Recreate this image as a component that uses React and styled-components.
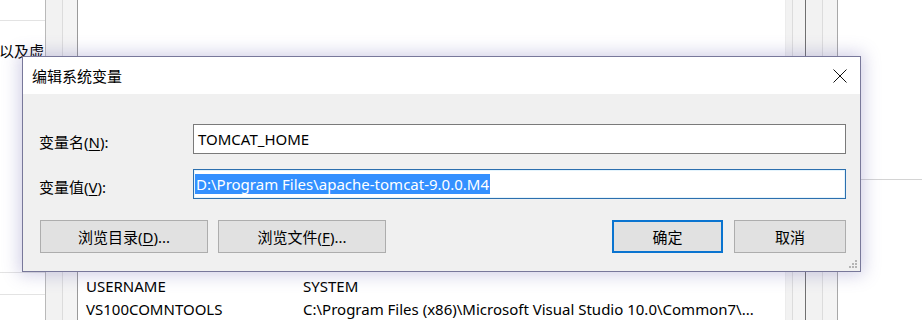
import React from 'react';
import styled, { createGlobalStyle } from 'styled-components';

const GlobalStyle = createGlobalStyle`
  html, body {
    margin: 0;
    padding: 0;
    background: #ffffff;
  }
  body {
    width: 922px;
    height: 320px;
    overflow: hidden;
    font-family: "Segoe UI", "Noto Sans", "Noto Sans CJK SC", sans-serif;
    font-size: 15px;
    color: #000;
  }
`;

const Desktop = styled.div`
  position: relative;
  display: flex;
  width: 922px;
  height: 320px;
  overflow: hidden;
  background: #fff;
`;

const LeftPane = styled.div`
  width: 45px;
  flex: none;
  display: flex;
  flex-direction: column;
  overflow: hidden;
  background: #fff;
`;

const PaneLine = styled.div`
  height: 1px;
  background: #e3e3e3;
  margin-top: ${p => p.$gap}px;
`;

const PaneText = styled.div`
  margin-top: 20px;
  white-space: nowrap;
  line-height: 20px;
  margin-left: -1px;
`;

const FrameStrip = styled.div`
  width: ${p => p.$w}px;
  flex: none;
  box-sizing: border-box;
  border-left: 1px solid ${p => p.$left};
  border-right: 1px solid ${p => p.$right};
  background: linear-gradient(
    to right,
    #f2f2f2 0,
    #f2f2f2 ${p => p.$mid}px,
    #dcdcdc ${p => p.$mid}px,
    #dcdcdc ${p => p.$mid + 1}px,
    #f4f4f4 ${p => p.$mid + 1}px
  );
`;

const List = styled.div`
  width: 707px;
  flex: none;
  display: flex;
  flex-direction: column;
  padding-top: 275px;
  box-sizing: border-box;
  background: #fff;
`;

const ListRow = styled.div`
  display: flex;
  height: 24px;
  align-items: center;
  padding-left: 8px;
  white-space: nowrap;
`;

const NameCell = styled.div`
  width: 217px;
  flex: none;
`;

const RightArea = styled.div`
  flex: 1;
  display: flex;
  flex-direction: column;
`;

const RightLine = styled.div`
  margin-top: 179px;
  height: 1px;
  background: #d4d4d4;
`;

const Dialog = styled.div`
  position: absolute;
  left: 22px;
  top: 56px;
  width: 839px;
  height: 216px;
  box-sizing: border-box;
  border: 1px solid #78789a;
  background: #f0f0f0;
  display: flex;
  flex-direction: column;
  box-shadow: 0 0 16px 3px rgba(95, 85, 170, 0.28);
`;

const TitleBar = styled.div`
  height: 37px;
  flex: none;
  background: #fff;
  display: flex;
  align-items: center;
  justify-content: space-between;
  padding-left: 9px;
`;

const Title = styled.div`
  font-size: 15px;
  line-height: 20px;
  margin-top: 1px;
`;

const CloseButton = styled.div`
  width: 40px;
  height: 37px;
  display: flex;
  align-items: center;
  justify-content: center;
`;

const Body = styled.div`
  flex: 1;
  position: relative;
  padding: 30px 14px 0 16px;
`;

const Field = styled.div`
  display: grid;
  grid-template-columns: 154px 1fr;
  align-items: center;
  height: 30px;
  margin-bottom: 15px;
`;

const Label = styled.div`
  line-height: 20px;
  margin-top: 6px;
  white-space: nowrap;
`;

const U = styled.span`
  text-decoration: underline;
  text-underline-offset: 2px;
`;

const TextBox = styled.div`
  height: 30px;
  box-sizing: border-box;
  border: 1px solid ${p => (p.$focused ? '#2c6fae' : '#7a7a7a')};
  box-shadow: ${p => (p.$focused ? 'inset 0 0 0 1px #e4f4fd' : 'none')};
  background: #fff;
  display: flex;
  align-items: center;
  padding-left: ${p => (p.$focused ? '1px' : '4px')};
  white-space: nowrap;
`;

const Selected = styled.span`
  background: #3390ff;
  color: #fff;
  line-height: 20px;
  padding: 0 1px 0 1px;
`;

const ButtonRow = styled.div`
  display: flex;
  justify-content: space-between;
  margin-top: 21px;
  padding-left: 1px;
`;

const ButtonGroup = styled.div`
  display: flex;
  gap: ${p => p.$gap}px;
`;

const Button = styled.div`
  width: ${p => p.$w}px;
  height: 33px;
  box-sizing: border-box;
  background: #e1e1e1;
  border: ${p => (p.$primary ? '2px solid #0a74d0' : '1px solid #adadad')};
  display: flex;
  align-items: center;
  justify-content: center;
  white-space: nowrap;
  line-height: 20px;
`;

const Grip = styled.svg`
  position: absolute;
  right: 3px;
  bottom: 3px;
`;

const CloseIcon = () => (
  <svg width="14" height="14" viewBox="0 0 14 14">
    <path d="M0.5 0.5 L13.5 13.5 M13.5 0.5 L0.5 13.5" stroke="#111" strokeWidth="1" />
  </svg>
);

const ResizeGrip = () => (
  <Grip width="10" height="10" viewBox="0 0 10 10">
    {[[8, 0], [5, 3], [8, 3], [2, 6], [5, 6], [8, 6]].map(([x, y]) => (
      <rect key={`${x}-${y}`} x={x} y={y + 2} width="2" height="2" fill="#b4b4b4" />
    ))}
  </Grip>
);

const App = () => {
  return (
    <Desktop>
      <GlobalStyle />
      <LeftPane>
        <PaneLine $gap={20} />
        <PaneText>以及虚</PaneText>
        <PaneLine $gap={211} />
        <PaneLine $gap={21} />
      </LeftPane>
      <FrameStrip $w={33} $mid={16} $left="#b9b9b9" $right="#9a9a9a" />
      <List>
        <ListRow>
          <NameCell>USERNAME</NameCell>
          <span>SYSTEM</span>
        </ListRow>
        <ListRow>
          <NameCell>VS100COMNTOOLS</NameCell>
          <span>C:\Program Files (x86)\Microsoft Visual Studio 10.0\Common7\...</span>
        </ListRow>
      </List>
      <FrameStrip $w={21} $mid={6} $left="#ececec" $right="#707070" />
      <FrameStrip $w={32} $mid={15} $left="#f4f4f4" $right="#a8a8a8" />
      <RightArea>
        <RightLine />
      </RightArea>

      <Dialog>
        <TitleBar>
          <Title>编辑系统变量</Title>
          <CloseButton>
            <CloseIcon />
          </CloseButton>
        </TitleBar>
        <Body>
          <Field>
            <Label>
              变量名(<U>N</U>):
            </Label>
            <TextBox>TOMCAT_HOME</TextBox>
          </Field>
          <Field>
            <Label>
              变量值(<U>V</U>):
            </Label>
            <TextBox $focused>
              <Selected>D:\Program Files\apache-tomcat-9.0.0.M4</Selected>
            </TextBox>
          </Field>
          <ButtonRow>
            <ButtonGroup $gap={10}>
              <Button $w={168}>
                浏览目录(<U>D</U>)...
              </Button>
              <Button $w={168}>
                浏览文件(<U>F</U>)...
              </Button>
            </ButtonGroup>
            <ButtonGroup $gap={11}>
              <Button $w={111} $primary>
                确定
              </Button>
              <Button $w={112}>取消</Button>
            </ButtonGroup>
          </ButtonRow>
          <ResizeGrip />
        </Body>
      </Dialog>
    </Desktop>
  );
};

export default App;
